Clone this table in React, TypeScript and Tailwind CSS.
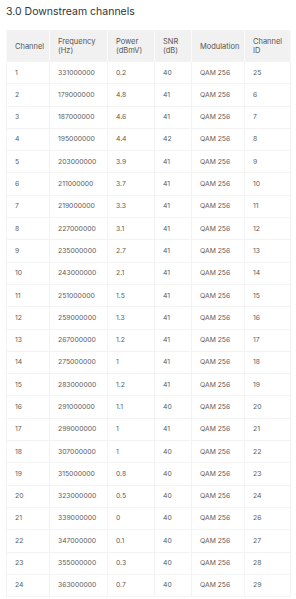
const rows: [number, string, string, number, number][] = [
  [1, "331000000", "0.2", 40, 25],
  [2, "179000000", "4.8", 41, 6],
  [3, "187000000", "4.6", 41, 7],
  [4, "195000000", "4.4", 42, 8],
  [5, "203000000", "3.9", 41, 9],
  [6, "211000000", "3.7", 41, 10],
  [7, "219000000", "3.3", 41, 11],
  [8, "227000000", "3.1", 41, 12],
  [9, "235000000", "2.7", 41, 13],
  [10, "243000000", "2.1", 41, 14],
  [11, "251000000", "1.5", 41, 15],
  [12, "259000000", "1.3", 41, 16],
  [13, "267000000", "1.2", 41, 17],
  [14, "275000000", "1", 41, 18],
  [15, "283000000", "1.2", 41, 19],
  [16, "291000000", "1.1", 40, 20],
  [17, "299000000", "1", 41, 21],
  [18, "307000000", "1", 40, 22],
  [19, "315000000", "0.8", 40, 23],
  [20, "323000000", "0.5", 40, 24],
  [21, "339000000", "0", 40, 26],
  [22, "347000000", "0.1", 40, 27],
  [23, "355000000", "0.3", 40, 28],
  [24, "363000000", "0.7", 40, 29],
];

const headers = [
  ["Channel"],
  ["Frequency", "(Hz)"],
  ["Power", "(dBmV)"],
  ["SNR", "(dB)"],
  ["Modulation"],
  ["Channel", "ID"],
];

const widths = ["w-[43px]", "w-[58px]", "w-[47px]", "w-[37px]", "w-[53px]", "w-[46px]"];

const cell = "border-x border-[#f3f3f3] px-[8px] text-[6.8px] text-[#5c5c5c]";

export default function App() {
  return (
    <div className="w-[296px] bg-white px-[6px] pt-[5px] font-['Inter',sans-serif]">
      <h2 className="text-[10.5px] leading-[14px] text-[#333333]">3.0 Downstream channels</h2>
      <table className="mt-[11px] w-[284px] table-fixed border-collapse border border-[#f3f3f3] text-left">
        <thead>
          <tr className="h-[31px] bg-[#f1f1f1]">
            {headers.map((h, i) => (
              <th
                key={i}
                className={`${widths[i]} border-x border-[#fafafa] px-[8px] align-middle text-[7.5px] font-normal leading-[9px] text-[#555555]`}
              >
                {h.map((line) => (
                  <div key={line}>{line}</div>
                ))}
              </th>
            ))}
          </tr>
        </thead>
        <tbody>
          {rows.map((r) => (
            <tr key={r[0]} className="h-[22.3px] border-t border-[#f3f3f3]">
              <td className={cell}>{r[0]}</td>
              <td className={cell}>{r[1]}</td>
              <td className={cell}>{r[2]}</td>
              <td className={cell}>{r[3]}</td>
              <td className={cell}>QAM 256</td>
              <td className={cell}>{r[4]}</td>
            </tr>
          ))}
        </tbody>
      </table>
    </div>
  );
}
